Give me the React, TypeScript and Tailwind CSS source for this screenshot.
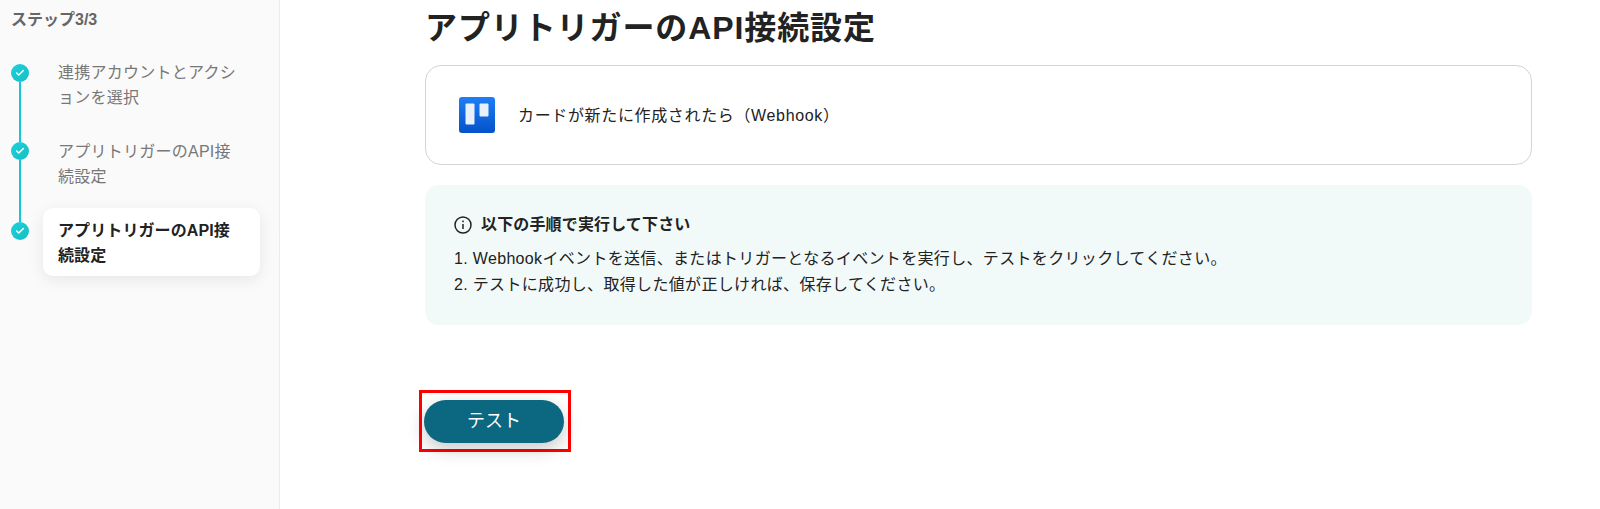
import React from 'react';
import { Check } from 'lucide-react';

const FONT = 'font-["Liberation_Sans","Noto_Sans_CJK_JP",sans-serif]';

const StepDot = () => (
    <div className="w-[18px] h-[18px] shrink-0 rounded-full bg-gradient-to-br from-[#1fd0e0] to-[#16bfc0] flex items-center justify-center">
        <Check className="w-[10px] h-[10px] text-white" strokeWidth={3.5} />
    </div>
);

const TrelloIcon = () => (
    <svg width="36" height="36" viewBox="0 0 36 36" className="shrink-0">
        <defs>
            <linearGradient id="trello" x1="0" y1="0" x2="0" y2="1">
                <stop offset="0" stopColor="#1e7ff5" />
                <stop offset="1" stopColor="#0352c9" />
            </linearGradient>
        </defs>
        <rect width="36" height="36" rx="3" fill="url(#trello)" />
        <rect x="6.5" y="6.5" width="9" height="21" rx="1" fill="#e8f0fc" />
        <rect x="20.5" y="6.5" width="9" height="13" rx="1" fill="#e8f0fc" />
    </svg>
);

const InfoIcon = () => (
    <svg width="18" height="18" viewBox="0 0 18 18" fill="none" stroke="#222" strokeWidth="1.5" className="shrink-0">
        <circle cx="9" cy="9" r="8" />
        <path d="M9 8v5" />
        <path d="M9 4.6v1.6" />
    </svg>
);

export default function App() {
    return (
        <div className={`flex w-[1600px] h-[509px] overflow-hidden bg-white ${FONT}`}>
            <aside className="w-[280px] shrink-0 bg-[#fafafa] border-r border-[#ececec] pt-[10px]">
                <p className="pl-[11px] text-[16px] leading-[20px] font-bold text-[#666]">ステップ3/3</p>

                <div className="mt-[34px] pl-[11px]">
                    <div className="flex h-[78px]">
                        <div className="flex flex-col items-center w-[18px]">
                            <StepDot />
                            <div className="w-[2px] flex-1 bg-[#14c6d6]" />
                        </div>
                        <p className="ml-[29px] -mt-[4px] w-[185px] text-[16px] leading-[25px] tracking-[0.25px] text-[#777]">
                            連携アカウントとアクションを選択
                        </p>
                    </div>
                    <div className="flex h-[80px]">
                        <div className="flex flex-col items-center w-[18px]">
                            <StepDot />
                            <div className="w-[2px] flex-1 bg-[#14c6d6]" />
                        </div>
                        <p className="ml-[29px] -mt-[3px] w-[185px] text-[16px] leading-[25px] tracking-[0.25px] text-[#777]">
                            アプリトリガーのAPI接続設定
                        </p>
                    </div>
                    <div className="flex">
                        <StepDot />
                        <div className="ml-[14px] -mt-[14px] w-[217px] h-[68px] bg-white rounded-[10px] shadow-[0_4px_16px_rgba(0,0,0,0.08)] pl-[15px] pr-[17px] pt-[10px]">
                            <p className="text-[16px] leading-[25px] tracking-[0.1px] font-bold text-[#222]">アプリトリガーのAPI接続設定</p>
                        </div>
                    </div>
                </div>
            </aside>

            <main className="flex-1 pl-[145px] pr-[68px]">
                <h1 className="mt-[7px] text-[32px] leading-[42px] tracking-[0.9px] font-bold text-[#222]">アプリトリガーのAPI接続設定</h1>

                <div className="mt-[16px] h-[100px] flex items-center gap-[23px] pl-[33px] border border-[#d4d4d4] rounded-[16px]">
                    <TrelloIcon />
                    <span className="pt-[2px] text-[16px] tracking-[0.65px] text-[#222]">カードが新たに作成されたら（Webhook）</span>
                </div>

                <div className="mt-[20px] h-[140px] bg-[#f2faf9] rounded-[14px] pl-[29px] pt-[29px]">
                    <div className="flex items-center gap-[9px]">
                        <InfoIcon />
                        <span className="text-[16px] leading-[22px] tracking-[0.15px] font-bold text-[#222]">以下の手順で実行して下さい</span>
                    </div>
                    <p className="mt-[10px] text-[16px] leading-[26px] tracking-[0.33px] text-[#222]">1. Webhookイベントを送信、またはトリガーとなるイベントを実行し、テストをクリックしてください。</p>
                    <p className="text-[16px] leading-[26px] tracking-[0.33px] text-[#222]">2. テストに成功し、取得した値が正しければ、保存してください。</p>
                </div>

                <div className="mt-[65px] -ml-[6px] inline-block border-[3px] border-[#ff0000] pl-[2px] pr-[4px] pt-[7px] pb-[6px]">
                    <button className="block w-[140px] h-[43px] rounded-full bg-[#0b6880] text-white text-[18px] shadow-[0_6px_18px_rgba(0,0,0,0.22)]">
                        テスト
                    </button>
                </div>
            </main>
        </div>
    );
}
